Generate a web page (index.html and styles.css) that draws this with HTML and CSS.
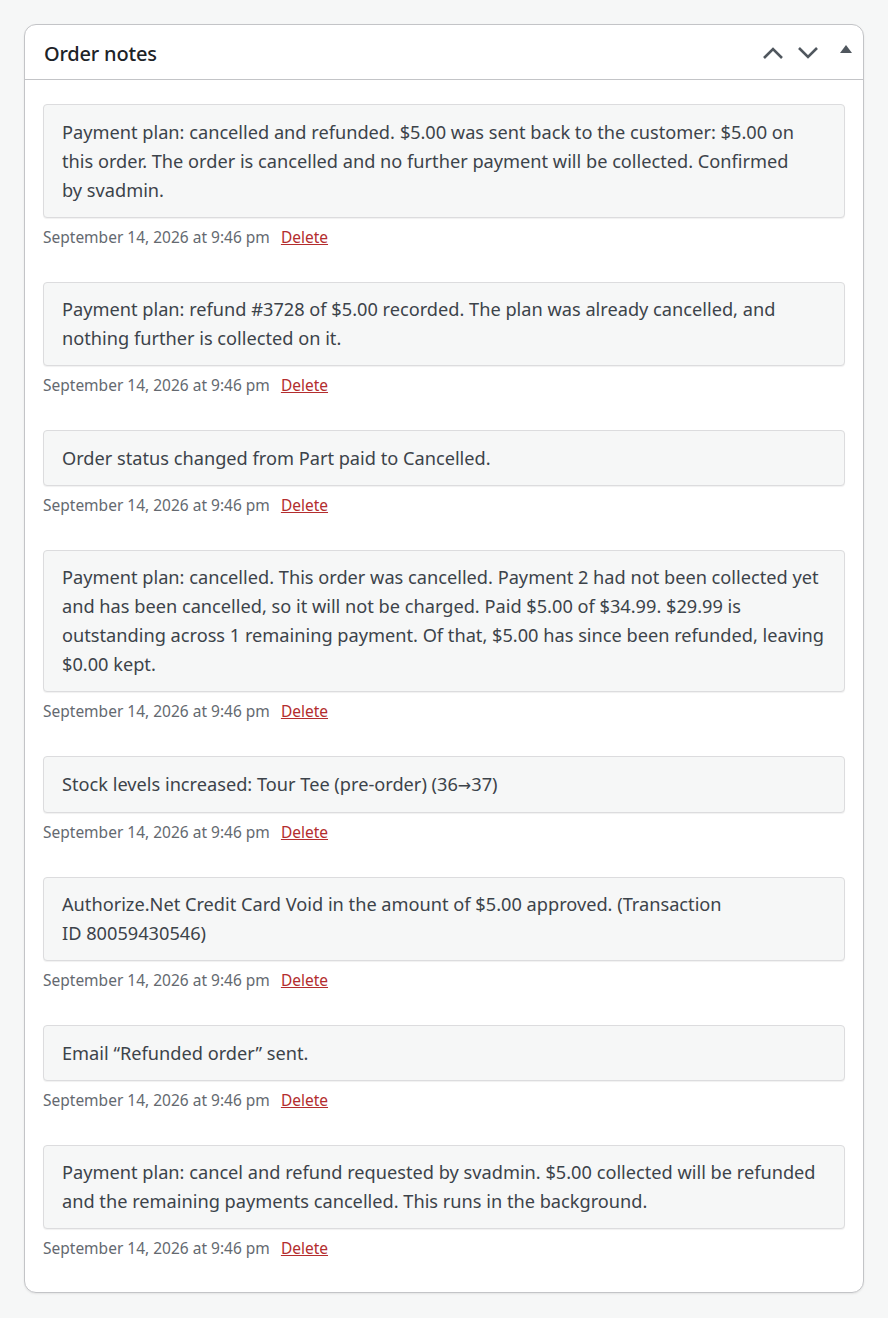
FILE: index.html
```html
<!DOCTYPE html>
<html>
<head>
<meta charset="UTF-8">
<title>Order notes</title>
<link rel="stylesheet" href="styles.css">
</head>
<body>
<div class="postbox">
  <div class="postbox-header">
    <h2>Order notes</h2>
    <div class="handle-actions">
      <button class="handle" aria-label="Move up">
        <svg width="22" height="14" viewBox="0 0 22 14"><path d="M2 12 L11 3 L20 12" fill="none" stroke="#50575e" stroke-width="2.6"/></svg>
      </button>
      <button class="handle" aria-label="Move down">
        <svg width="22" height="14" viewBox="0 0 22 14"><path d="M2 2 L11 11 L20 2" fill="none" stroke="#50575e" stroke-width="2.6"/></svg>
      </button>
      <button class="handle toggle" aria-label="Toggle panel">
        <svg width="12" height="8" viewBox="0 0 12 8"><path d="M0 8 L6 0 L12 8 Z" fill="#50575e"/></svg>
      </button>
    </div>
  </div>
  <ul class="order-notes">
    <li class="note">
      <div class="note-content">Payment plan: cancelled and refunded. $5.00 was sent back to the customer: $5.00 on<br>this order. The order is cancelled and no further payment will be collected. Confirmed<br>by svadmin.</div>
      <p class="meta">September 14, 2026 at 9:46 pm <a href="#" class="delete-note">Delete</a></p>
    </li>
    <li class="note">
      <div class="note-content">Payment plan: refund #3728 of $5.00 recorded. The plan was already cancelled, and<br>nothing further is collected on it.</div>
      <p class="meta">September 14, 2026 at 9:46 pm <a href="#" class="delete-note">Delete</a></p>
    </li>
    <li class="note">
      <div class="note-content">Order status changed from Part paid to Cancelled.</div>
      <p class="meta">September 14, 2026 at 9:46 pm <a href="#" class="delete-note">Delete</a></p>
    </li>
    <li class="note">
      <div class="note-content">Payment plan: cancelled. This order was cancelled. Payment 2 had not been collected yet<br>and has been cancelled, so it will not be charged. Paid $5.00 of $34.99. $29.99 is<br>outstanding across 1 remaining payment. Of that, $5.00 has since been refunded, leaving<br>$0.00 kept.</div>
      <p class="meta">September 14, 2026 at 9:46 pm <a href="#" class="delete-note">Delete</a></p>
    </li>
    <li class="note">
      <div class="note-content">Stock levels increased: Tour Tee (pre-order) (36<span class="arrow">&rarr;</span>37)</div>
      <p class="meta">September 14, 2026 at 9:46 pm <a href="#" class="delete-note">Delete</a></p>
    </li>
    <li class="note">
      <div class="note-content">Authorize.Net Credit Card Void in the amount of $5.00 approved. (Transaction<br>ID 80059430546)</div>
      <p class="meta">September 14, 2026 at 9:46 pm <a href="#" class="delete-note">Delete</a></p>
    </li>
    <li class="note">
      <div class="note-content">Email &ldquo;Refunded order&rdquo; sent.</div>
      <p class="meta">September 14, 2026 at 9:46 pm <a href="#" class="delete-note">Delete</a></p>
    </li>
    <li class="note">
      <div class="note-content">Payment plan: cancel and refund requested by svadmin. $5.00 collected will be refunded<br>and the remaining payments cancelled. This runs in the background.</div>
      <p class="meta">September 14, 2026 at 9:46 pm <a href="#" class="delete-note">Delete</a></p>
    </li>
  </ul>
</div>
</body>
</html>
```

FILE: styles.css
```css
* {
  margin: 0;
  padding: 0;
  box-sizing: border-box;
}

body {
  background-color: #f6f7f7;
  font-family: "Noto Sans", "Open Sans", sans-serif;
  color: #3c434a;
  padding: 24px 24px 26px 24px;
}

.postbox {
  width: 840px;
  background-color: #fff;
  border: 1px solid #c3c4c7;
  border-radius: 12px;
  box-shadow: 0 1px 2px rgba(0, 0, 0, 0.08);
}

.postbox-header {
  height: 55px;
  border-bottom: 1px solid #c3c4c7;
  display: flex;
  align-items: center;
  justify-content: space-between;
  padding: 0 11px 0 19px;
}

.postbox-header h2 {
  font-size: 20px;
  font-weight: 500;
  color: #1d2327;
  letter-spacing: -0.2px;
  margin-top: 2px;
}

.handle-actions {
  display: flex;
  align-items: center;
  margin-top: 1px;
}

.handle {
  background: none;
  border: 0;
  display: flex;
  align-items: center;
  margin-left: 13px;
}

.toggle {
  margin-left: 21px;
  margin-top: -7px;
}

.order-notes {
  list-style: none;
  padding: 24px 18px 33px 18px;
}

.note {
  margin-bottom: 34px;
}

.note:last-child {
  margin-bottom: 0;
}

.note-content {
  background-color: #f6f7f7;
  border: 1px solid #dcdcde;
  border-radius: 4px;
  box-shadow: 0 1px 1px rgba(0, 0, 0, 0.06);
  padding: 12.5px 18px 12px 18px;
  font-size: 18.2px;
  line-height: 29px;
  white-space: nowrap;
}

.arrow {
  font-family: "DejaVu Sans", sans-serif;
  font-size: 16px;
}

.meta {
  margin-top: 9px;
  font-size: 15.5px;
  line-height: 21px;
  color: #646970;
}

.delete-note {
  color: #b32d2e;
  margin-left: 7px;
}
```
